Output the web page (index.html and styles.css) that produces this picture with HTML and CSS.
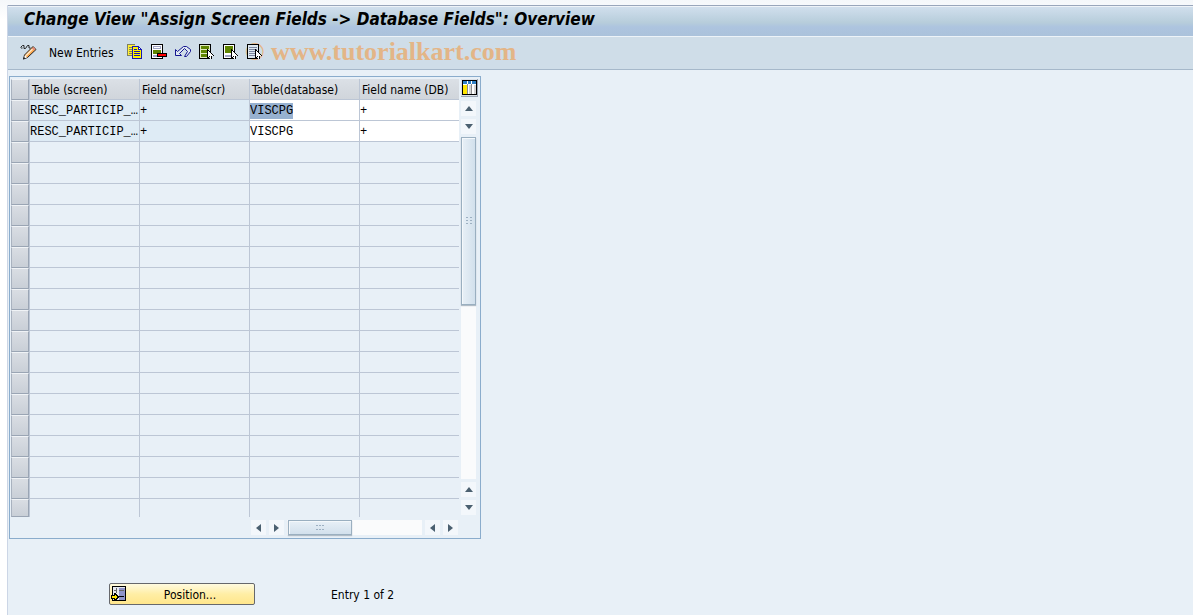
FILE: index.html
```html
<!DOCTYPE html>
<html lang="en">
<head>
    <meta charset="UTF-8">
    <meta name="viewport" content="width=device-width, initial-scale=1.0">
    <title>Change View "Assign Screen Fields -&gt; Database Fields": Overview</title>
    <link rel="stylesheet" href="styles.css">
</head>
<body>
    <div class="app">
        <h1 class="title">Change View "Assign Screen Fields -&gt; Database Fields": Overview</h1>

        <div class="toolbar">
            <span class="watermark">© www.tutorialkart.com</span>
            <button type="button" class="tool" aria-label="Display / Change">
                <svg width="17" height="16" viewBox="0 0 17 16">
                    <path d="M.5 3.500l2-2 1.500 0v3h1.500l2-3h1.500v2.500h1.500M1 4h1.500" fill="none" stroke="#222"/>
                    <path d="M13 2.500l3 3-8.500 8-4 1.500 1-4z" fill="#ffa94d" stroke="#222"/>
                    <path d="M6 11.500l6.500-6.500" stroke="#ffe9c8" stroke-width="1.500"/>
                    <path d="M12.800 3.800l2 2" stroke="#e58a7c" stroke-width="2"/>
                    <path d="M5 11l2 2.500-3 1z" fill="#fff"/>
                    <path d="M3 15.500l1-2.500 1.500 1.500z" fill="#222"/>
                </svg>
            </button>
            <button type="button" class="tool text">New Entries</button>
            <button type="button" class="tool" aria-label="Copy As">
                <svg width="16" height="16" viewBox="0 0 16 16" shape-rendering="crispEdges">
                    <path d="M0 0h8v2h2v10H0z" fill="#808060"/>
                    <path d="M1 1h7v10H1z" fill="#ffef30"/>
                    <path d="M2 3h3v1H2zM2 5h3v1H2zM2 7h3v1H2zM2 9h3v1H2z" fill="#808060"/>
                    <path d="M5 2h7v1h1v1h1v1h1v10H5z" fill="#1818b0"/>
                    <path d="M6 3h5v3h3v8H6z" fill="#fff200"/>
                    <path d="M12 4h1v1h-1z" fill="#fff"/>
                    <path d="M7 5h3v1H7zM7 7h6v1H7zM7 9h6v1H7zM7 11h6v1H7z" fill="#1818b0"/>
                </svg>
            </button>
            <button type="button" class="tool" aria-label="Delete">
                <svg width="16" height="16" viewBox="0 0 16 16" shape-rendering="crispEdges">
                    <path d="M0 0h12v15H0z" fill="#000"/>
                    <path d="M1 1h10v13H1z" fill="#fff"/>
                    <path d="M2 2h8v3H2zM2 11h6v2H2z" fill="#a0a4c4"/>
                    <path d="M3 3h6v1H3z" fill="#fff"/>
                    <path d="M2 6h8v4H2z" fill="#5f8500"/>
                    <path d="M6 9h10v4H6z" fill="#000"/>
                    <path d="M7 10h8v2H7z" fill="#f00"/>
                </svg>
            </button>
            <button type="button" class="tool" aria-label="Undo Change">
                <svg width="16" height="16" viewBox="0 0 16 16">
                    <path d="M.5 5.500v6h6l-2-2 5-5 3 3-3 5h2l4-5v-2l-4-3h-3l-6 5z" fill="#dfe9f2" stroke="#151590"/>
                </svg>
            </button>
            <button type="button" class="tool" aria-label="Select All">
                <svg width="16" height="16" viewBox="0 0 16 16" shape-rendering="crispEdges">
                    <path d="M0 0h12v15H0z" fill="#000"/>
                    <path d="M1 1h10v13H1z" fill="#dfeabf"/>
                    <path d="M2 2h8v3H2zM2 6h8v3H2zM2 10h8v3H2z" fill="#5f8500"/>
                    <path d="M8 5h1v1h1v1h1v1h1v1h1v1h1v1h1v1h-2v3h-2v-2h-1v1H8z" fill="#000"/>
                    <path d="M9 7h1v1h1v1h1v1h1v1h1v1h-2v3h-1v-3h-1v1H9z" fill="#fff"/>
                </svg>
            </button>
            <button type="button" class="tool" aria-label="Select Block">
                <svg width="16" height="16" viewBox="0 0 16 16" shape-rendering="crispEdges">
                    <path d="M0 0h12v15H0z" fill="#000"/>
                    <path d="M1 1h10v13H1z" fill="#fff"/>
                    <path d="M2 2h8v7H2z" fill="#5f8500"/>
                    <path d="M2 11h7v2H2z" fill="#a0a4c4"/>
                    <path d="M8 5h1v1h1v1h1v1h1v1h1v1h1v1h1v1h-2v3h-2v-2h-1v1H8z" fill="#000"/>
                    <path d="M9 7h1v1h1v1h1v1h1v1h1v1h-2v3h-1v-3h-1v1H9z" fill="#fff"/>
                </svg>
            </button>
            <button type="button" class="tool" aria-label="Deselect All">
                <svg width="16" height="16" viewBox="0 0 16 16" shape-rendering="crispEdges">
                    <path d="M0 0h12v15H0z" fill="#000"/>
                    <path d="M1 1h10v13H1z" fill="#dde8f0"/>
                    <path d="M2 3h8v1H2zM2 5h8v1H2zM2 7h8v1H2zM2 9h8v1H2zM2 11h8v1H2z" fill="#7d86a0"/>
                    <path d="M8 5h1v1h1v1h1v1h1v1h1v1h1v1h1v1h-2v3h-2v-2h-1v1H8z" fill="#000"/>
                    <path d="M9 7h1v1h1v1h1v1h1v1h1v1h-2v3h-1v-3h-1v1H9z" fill="#fff"/>
                </svg>
            </button>
        </div>

        <div class="table-control">
            <div class="table-main">
                <table class="grid">
                    <colgroup>
                        <col class="col-select">
                        <col class="col-field">
                        <col class="col-field">
                        <col class="col-field">
                        <col class="col-last">
                    </colgroup>
                    <thead>
                        <tr>
                            <th class="select"></th>
                            <th>Table (screen)</th>
                            <th>Field name(scr)</th>
                            <th>Table(database)</th>
                            <th>Field name (DB)</th>
                        </tr>
                    </thead>
                    <tbody>
                        <tr class="filled">
                            <td class="select"></td>
                            <td>RESC_PARTICIP_…</td>
                            <td>+</td>
                            <td class="edit"><input type="text" class="selected" value="VISCPG" aria-label="Table(database), row 1"></td>
                            <td class="edit"><input type="text" value="+" aria-label="Field name (DB), row 1"></td>
                        </tr>
                        <tr class="filled">
                            <td class="select"></td>
                            <td>RESC_PARTICIP_…</td>
                            <td>+</td>
                            <td class="edit"><input type="text" value="VISCPG" aria-label="Table(database), row 2"></td>
                            <td class="edit"><input type="text" value="+" aria-label="Field name (DB), row 2"></td>
                        </tr>
                        <tr><td class="select"></td><td></td><td></td><td></td><td></td></tr>
                        <tr><td class="select"></td><td></td><td></td><td></td><td></td></tr>
                        <tr><td class="select"></td><td></td><td></td><td></td><td></td></tr>
                        <tr><td class="select"></td><td></td><td></td><td></td><td></td></tr>
                        <tr><td class="select"></td><td></td><td></td><td></td><td></td></tr>
                        <tr><td class="select"></td><td></td><td></td><td></td><td></td></tr>
                        <tr><td class="select"></td><td></td><td></td><td></td><td></td></tr>
                        <tr><td class="select"></td><td></td><td></td><td></td><td></td></tr>
                        <tr><td class="select"></td><td></td><td></td><td></td><td></td></tr>
                        <tr><td class="select"></td><td></td><td></td><td></td><td></td></tr>
                        <tr><td class="select"></td><td></td><td></td><td></td><td></td></tr>
                        <tr><td class="select"></td><td></td><td></td><td></td><td></td></tr>
                        <tr><td class="select"></td><td></td><td></td><td></td><td></td></tr>
                        <tr><td class="select"></td><td></td><td></td><td></td><td></td></tr>
                        <tr><td class="select"></td><td></td><td></td><td></td><td></td></tr>
                        <tr><td class="select"></td><td></td><td></td><td></td><td></td></tr>
                        <tr><td class="select"></td><td></td><td></td><td></td><td></td></tr>
                        <tr><td class="select"></td><td></td><td></td><td></td><td></td></tr>
                    </tbody>
                </table>
                <div class="hscroll">
                    <button type="button" class="arrow" aria-label="First column"><svg width="5" height="8" viewBox="0 0 5 8"><path d="M5 0v8L0 4z"/></svg></button>
                    <button type="button" class="arrow" aria-label="Column left"><svg width="5" height="8" viewBox="0 0 5 8"><path d="M0 0v8l5-4z"/></svg></button>
                    <div class="track">
                        <div class="thumb">
                            <svg width="8" height="5" viewBox="0 0 8 5" shape-rendering="crispEdges"><path d="M0 0h2v1H0zM3 0h2v1H3zM6 0h2v1H6zM0 4h2v1H0zM3 4h2v1H3zM6 4h2v1H6z"/></svg>
                        </div>
                    </div>
                    <button type="button" class="arrow" aria-label="Column right"><svg width="5" height="8" viewBox="0 0 5 8"><path d="M5 0v8L0 4z"/></svg></button>
                    <button type="button" class="arrow" aria-label="Last column"><svg width="5" height="8" viewBox="0 0 5 8"><path d="M0 0v8l5-4z"/></svg></button>
                </div>
            </div>

            <div class="table-side">
                <button type="button" class="config" aria-label="Table settings">
                    <svg width="15" height="15" viewBox="0 0 15 15" shape-rendering="crispEdges">
                        <path d="M0 0h15v15H0z" fill="#000"/>
                        <path d="M1 1h13v13H1z" fill="#fff"/>
                        <path d="M1 1h4v3H1zM6 1h3v3H6zM10 1h4v3h-4z" fill="#2f7fc4"/>
                        <path d="M1 5h4v9H1z" fill="#ffe600"/>
                        <path d="M5 4h1v10H5zM9 4h1v10H9z" fill="#8c8c8c"/>
                        <path d="M7 5h2v9H7zM12 5h2v9h-2z" fill="#d4d4d4"/>
                    </svg>
                </button>
                <div class="vscroll">
                    <button type="button" class="arrow" aria-label="First row"><svg width="8" height="5" viewBox="0 0 8 5"><path d="M0 5h8L4 0z"/></svg></button>
                    <button type="button" class="arrow" aria-label="Row up"><svg width="8" height="5" viewBox="0 0 8 5"><path d="M0 0h8L4 5z"/></svg></button>
                    <div class="track">
                        <div class="thumb">
                            <svg width="6" height="8" viewBox="0 0 6 8" shape-rendering="crispEdges"><path d="M0 0h2v1H0zM4 0h2v1H4zM0 3h2v1H0zM4 3h2v1H4zM0 6h2v1H0zM4 6h2v1H4z"/></svg>
                        </div>
                    </div>
                    <button type="button" class="arrow" aria-label="Row down"><svg width="8" height="5" viewBox="0 0 8 5"><path d="M0 5h8L4 0z"/></svg></button>
                    <button type="button" class="arrow" aria-label="Last row"><svg width="8" height="5" viewBox="0 0 8 5"><path d="M0 0h8L4 5z"/></svg></button>
                </div>
            </div>
        </div>

        <div class="footer">
            <button type="button" class="position">
                <svg width="16" height="16" viewBox="0 0 16 16" shape-rendering="crispEdges">
                    <path d="M1 0h14v15H1z" fill="#000"/>
                    <path d="M2 1h12v13H2z" fill="#e4e8f0"/>
                    <path d="M8 2h6v12H8z" fill="#8f93c8"/>
                    <path d="M3 4h3v1H3zM5 2h1v5H5zM8 4h5v1H8zM3 7h2v1H3z" fill="#666"/>
                    <path d="M8 10h5v1H8z" fill="#000"/>
                    <path d="M0 9h3V7h2v1h1v1h1v1h1v2H7v1H6v1H5v1H3v-2H0z" fill="#000"/>
                    <path d="M1 10h3V9h1v1h1v2H5v1H4v-1H1z" fill="#ffe600"/>
                </svg>
                <span>Position...</span>
            </button>
            <span class="entry">Entry 1 of 2</span>
        </div>
    </div>
</body>
</html>
```
FILE: styles.css
```css
* {
    box-sizing: border-box;
}
body {
    margin: 0;
    padding: 5px 0 0 7px;
    background: linear-gradient(#f4f7fa, #ffffff 20px);
    font-family: "DejaVu Sans Condensed", "Noto Sans", Tahoma, sans-serif;
    font-size: 12px;
    line-height: 16px;
    color: #000;
}
button, input {
    font: inherit;
    color: inherit;
    padding: 0;
    border: none;
    background: none;
}
svg {
    display: block;
}
.app {
    min-height: calc(100vh - 5px);
    border-left: 1px solid #ccd6e6;
    background-color: #e8f0f7;
}
.title {
    margin: 0;
    padding: 0 16px;
    height: 32px;
    border-top: 1px solid #99a6bb;
    border-bottom: 1px solid #edf3f8;
    box-shadow: inset 0 1px #eef3f8;
    background: linear-gradient(#d2e0ee, #b7cddb 55%, #adc4df 70%, #abc2db);
    font-size: 17px;
    line-height: 26px;
    font-weight: bold;
    font-style: italic;
}
.toolbar {
    position: relative;
    display: flex;
    align-items: center;
    gap: 8px;
    height: 33px;
    padding: 0 12px 2px;
    border-bottom: 1px solid #a6b8ca;
    background-color: #cfdde8;
}
.tool {
    position: relative;
}
.tool.text {
    margin: 0 5px 0 4px;
    padding-top: 2px;
}
.watermark {
    position: absolute;
    left: 237px;
    top: 0;
    font-family: "Liberation Serif", serif;
    font-size: 26px;
    line-height: 30px;
    font-weight: bold;
    color: #e3b587;
    white-space: nowrap;
}
.table-control {
    display: flex;
    gap: 2px;
    width: fit-content;
    margin: 6px 0 0 1px;
    padding: 2px 2px 3px 1px;
    border: 1px solid #8aaccc;
}
.grid {
    table-layout: fixed;
    width: 448px;
    border-spacing: 0;
}
.col-select {
    width: 18px;
}
.col-field {
    width: 110px;
}
.col-last {
    width: 100px;
}
.grid th, .grid td {
    height: 21px;
    padding: 2px 0 0;
    border-left: 1px solid #bcc6d5;
    border-bottom: 1px solid #bcc6d5;
    text-align: left;
    white-space: nowrap;
    overflow: hidden;
}
.grid th {
    padding-left: 2px;
    background: linear-gradient(#dbe0e6, #d0d5db);
    font-weight: normal;
}
.grid td {
    font-family: "Liberation Mono", "Courier New", monospace;
}
.filled td {
    background-color: #deebf5;
}
.filled td.edit {
    background-color: #fff;
}
.grid .select {
    border: 1px solid #9aa5b4;
    border-top-color: #f0f3f6;
    border-left-color: #a9b2bf;
    background: linear-gradient(#d9dde3, #c9cfd7);
}
.grid tr:last-child td:not(.select) {
    border-bottom: none;
}
.grid tbody tr:last-child td {
    height: 18px;
}
.edit input {
    display: block;
    width: 100%;
    height: 16px;
}
.edit input.selected {
    width: 6ch;
    background-color: #97b1d0;
}
.hscroll {
    display: flex;
    gap: 3px;
    height: 15px;
    margin: 3px 1px 0 240px;
}
.arrow {
    display: flex;
    flex: none;
    align-items: center;
    justify-content: center;
    width: 15px;
    height: 15px;
    background-color: #f3f7fb;
    fill: #4b6070;
}
.track {
    flex: 1;
    background-color: #fafbfc;
}
.thumb {
    display: flex;
    align-items: center;
    justify-content: center;
    border: 1px solid #9aafc0;
    box-shadow: 0 1px 1px #b0bcc6, inset 1px 1px #f4f8fb;
    fill: #9db0c2;
}
.hscroll .thumb {
    width: 64px;
    height: 15px;
    margin-left: 1px;
    background: linear-gradient(#e8f0f7, #d2e0ec);
}
.table-side {
    display: flex;
    flex-direction: column;
    gap: 4px;
    width: 17px;
}
.config {
    padding: 1px;
    border-right: 1px solid #9aa5b4;
    border-bottom: 1px solid #9aa5b4;
    background-color: #dbe0e6;
}
.vscroll {
    display: flex;
    flex: 1;
    flex-direction: column;
    gap: 3px;
    width: 15px;
    margin-bottom: 20px;
}
.vscroll .thumb {
    height: 168px;
    background: linear-gradient(90deg, #e8f0f7, #d2e0ec);
}
.footer {
    display: flex;
    align-items: center;
    gap: 76px;
    margin: 44px 0 0 101px;
}
.position {
    display: flex;
    align-items: center;
    width: 146px;
    height: 22px;
    padding: 0 1px;
    border: 1px solid #66686c;
    border-radius: 2px;
    background: linear-gradient(#fffbe0, #ffeea5 50%, #ffe68c);
}
.position span {
    flex: 1;
    padding-top: 2px;
    text-align: center;
}
.entry {
    padding-top: 2px;
}
```
